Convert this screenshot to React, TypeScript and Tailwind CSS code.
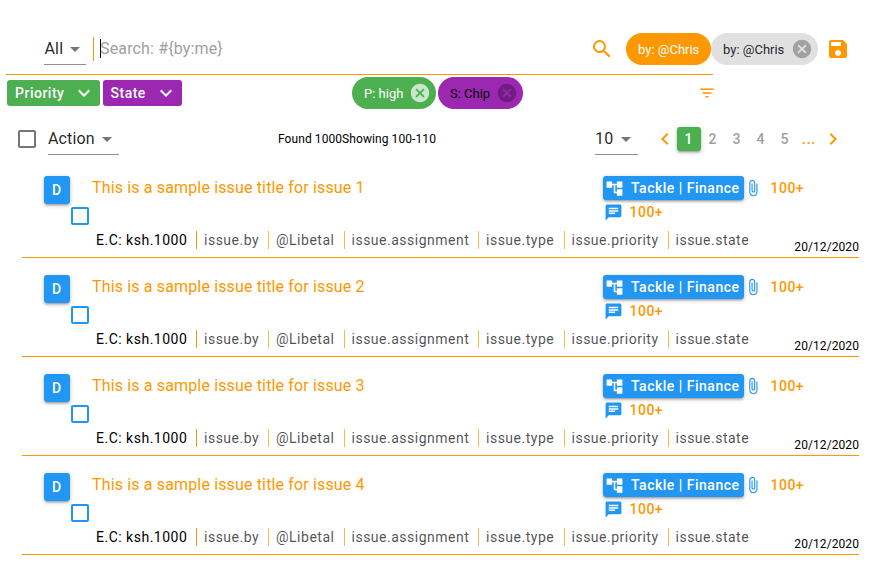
import React from "react";
import {
  MdAccountTree,
  MdArrowDropDown,
  MdAttachFile,
  MdCancel,
  MdChat,
  MdChevronLeft,
  MdChevronRight,
  MdExpandMore,
  MdFilterList,
  MdSave,
  MdSearch,
} from "react-icons/md";

const raised =
  "shadow-[0_1px_5px_rgba(0,0,0,0.2),0_2px_2px_rgba(0,0,0,0.14),0_3px_1px_-2px_rgba(0,0,0,0.12)]";

function Select({ label, className }: { label: string; className: string }) {
  return (
    <div
      className={`flex h-8 shrink-0 items-center justify-between border-b border-[#8f8f8f] text-base tracking-[0.15px] text-black/87 ${className}`}
    >
      <span>{label}</span>
      <MdArrowDropDown className="size-6 shrink-0 text-black/54" />
    </div>
  );
}

function Chip({ label, className, icon }: { label: string; className: string; icon?: string }) {
  return (
    <div className={`flex h-8 shrink-0 items-center justify-between rounded-full pl-3 text-[13px] ${className}`}>
      <span className="pt-0.5 whitespace-nowrap">{label}</span>
      {icon && <MdCancel className={`size-[22px] shrink-0 ${icon}`} />}
    </div>
  );
}

function FilterButton({ label, className }: { label: string; className: string }) {
  return (
    <button
      className={`flex h-[26px] items-center justify-between rounded-[3px] pr-1 text-sm font-medium tracking-[0.5px] text-white ${className}`}
    >
      {label}
      <MdExpandMore className="size-6" />
    </button>
  );
}

const fields = [
  { text: "E.C: ksh.1000", box: "w-[101px] pl-px", color: "text-black" },
  { text: "issue.by", box: "w-[72px] pl-[7px] border-l border-[#ff9800]", color: "text-black/70" },
  { text: "@Libetal", box: "w-[76px] pl-[7px] border-l border-[#ff9800]/70", color: "text-black/70" },
  { text: "issue.assignment", box: "w-[134px] pl-[6.5px] border-l border-[#ff9800]/70", color: "text-black/70" },
  { text: "issue.type", box: "w-[86px] pl-[7px] border-l border-[#ff9800]/70", color: "text-black/70" },
  { text: "issue.priority", box: "w-[104px] pl-[6.5px] border-l border-[#ff9800]/70", color: "text-black/70" },
  { text: "issue.state", box: "w-[90px] pl-[6.5px] border-l border-[#ff9800]/70", color: "text-black/70" },
];

function Issue({ id }: { id: number }) {
  return (
    <article className="ml-[22px] flex h-[99px] w-[837px] flex-col border-b border-[#ff9800]">
      <div className="flex h-[72px] pt-[17px] pl-[22px]">
        <div
          className={`flex h-7 w-[26px] items-center justify-center rounded-[3px] bg-[#2196f3] pr-px text-sm font-medium text-white ${raised}`}
        >
          D
        </div>
        <div className="mt-[31px] ml-px size-[18px] rounded-[2px] border-2 border-[#2196f3]" />
        <h2 className="ml-[3px] w-[511px] text-base leading-6 tracking-[0.15px] text-[#ff9800]">
          This is a sample issue title for issue {id}
        </h2>
        <div className="text-sm font-medium tracking-[0.5px] text-[#ff9800]">
          <div className="flex h-6 items-center">
            <div className={`flex h-6 w-[141px] items-center rounded-[3px] bg-[#2196f3] pl-[1.5px] text-white ${raised}`}>
              <MdAccountTree className="mr-[7.5px] size-[19px]" />
              <span className="whitespace-nowrap">Tackle | Finance</span>
            </div>
            <MdAttachFile className="mr-[8.5px] size-[18px] text-[#2196f3]" />
            <span>100+</span>
          </div>
          <div className="flex h-6 items-center">
            <MdChat className="mr-[7px] ml-[0.5px] size-[19px] text-[#2196f3]" />
            <span>100+</span>
          </div>
        </div>
      </div>
      <div className="flex h-[26px] justify-between pl-[73px]">
        <div className="flex text-sm leading-[18px] tracking-[0.5px]">
          {fields.map((f) => (
            <span key={f.text} className={`h-[18px] whitespace-nowrap ${f.box} ${f.color}`}>
              {f.text}
            </span>
          ))}
        </div>
        <time className="mt-2 text-xs leading-4 tracking-[0.08px] text-black">20/12/2020</time>
      </div>
    </article>
  );
}

export default function App() {
  return (
    <main className="h-[562px] w-[873px] overflow-hidden bg-white font-['Roboto',sans-serif] text-black">
      <header className="flex h-[74px] items-start pt-[33px] pl-11">
        <Select label="All" className="w-[42px] pl-[0.5px] [&>svg]:-mr-px" />
        <div className="mt-1 ml-[7px] h-6 w-px bg-[#ff9800]" />
        <div className="mt-[6px] ml-1.5 h-[19px] w-px bg-black" />
        <div className="mt-1 h-6 w-[489px] text-base leading-6 tracking-[0.15px] text-[#a0a0a0]">
          <span className="-ml-px">{"Search: #{by:me}"}</span>
        </div>
        <MdSearch className="mt-1 size-6 text-[#ff9800]" />
        <Chip label="by: @Chris" className="ml-3 w-[85px] bg-[#ff9800] text-white" />
        <Chip label="by: @Chris" className="w-[107px] bg-[#e0e0e0] pr-[5px] text-black/87" icon="text-black/28" />
        <MdSave className="mt-1 ml-2 size-6 text-[#ff9800]" />
      </header>
      <div className="ml-1.5 h-px w-[707px] bg-[#ff9800]" />

      <section className="flex h-[46px] items-start pl-[7px]">
        <div className="mt-[5px] flex w-[345px] gap-[3px]">
          <FilterButton label="Priority" className="w-[93px] bg-[#4caf50] pl-2" />
          <FilterButton label="State" className="w-[79px] bg-[#9c27b0] pl-[7.5px]" />
        </div>
        <div className="mt-[2px] flex gap-[2px]">
          <Chip label="P: high" className="w-[84px] bg-[#4caf50] pr-[5px] text-white" icon="text-white/70" />
          <Chip label="S: Chip" className="w-[85px] bg-[#9c27b0] pr-[5px] text-black" icon="text-black/27" />
        </div>
        <MdFilterList className="mt-[9px] ml-[175px] size-[18px] text-[#ff9800]" />
      </section>

      <section className="flex h-[38px] items-start pl-[18px]">
        <div className="mt-[9px] size-[18px] rounded-[2px] border-2 border-black/54" />
        <Select label="Action" className="ml-3 h-[34px] w-[71px] pt-[2px]" />
        <p className="mt-[10px] ml-[159px] w-[317px] text-xs leading-4 tracking-[0.08px]">Found 1000Showing 100-110</p>
        <Select label="10" className="h-[34px] w-[43px] pt-[2px]" />
        <nav className="mt-[6px] ml-[15px] flex h-6 items-center text-center text-sm font-medium text-[#a0a0a0]">
          <MdChevronLeft className="size-6 text-[#ff9800]" />
          <span className={`w-6 rounded-[3px] bg-[#4caf50] pr-px leading-6 text-white ${raised}`}>1</span>
          {[2, 3, 4, 5].map((n) => (
            <span key={n} className="w-6 pr-px leading-6">
              {n}
            </span>
          ))}
          <span className="w-6 leading-6 tracking-[0.7px] text-[#ff9800]">...</span>
          <MdChevronRight className="size-6 text-[#ff9800]" />
        </nav>
      </section>

      {[1, 2, 3, 4].map((id) => (
        <Issue key={id} id={id} />
      ))}
    </main>
  );
}
